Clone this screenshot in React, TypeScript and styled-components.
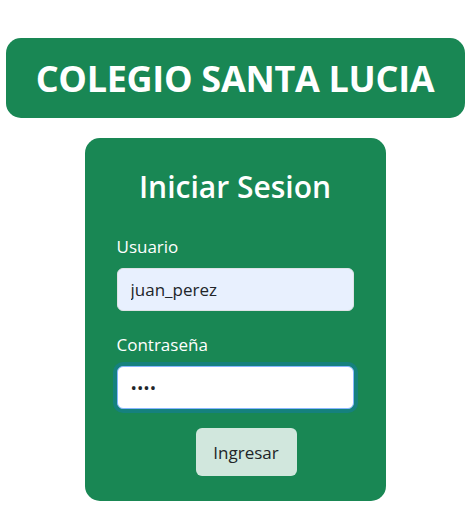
import React from "react";
import styled, { createGlobalStyle } from "styled-components";

const Global = createGlobalStyle`
  html, body { margin: 0; padding: 0; background: #fff; }
  body { font-family: "Open Sans", "Noto Sans", sans-serif; }
  * { box-sizing: border-box; }
`;

const Page = styled.div`
  display: flex;
  flex-direction: column;
  align-items: center;
  padding: 38px 0 0 0;
  gap: 20px;
`;

const Header = styled.header`
  width: 459px;
  height: 80px;
  background: #198754;
  border-radius: 15px;
  display: flex;
  align-items: center;
  justify-content: center;
`;

const Title = styled.h1`
  margin: 0;
  color: #fff;
  font-size: 36px;
  font-weight: 700;
  letter-spacing: -0.3px;
`;

const Card = styled.form`
  width: 301px;
  background: #198754;
  border-radius: 15px;
  padding: 28px 32px 25px 32px;
  display: flex;
  flex-direction: column;
`;

const CardTitle = styled.h2`
  margin: 0 0 27px;
  text-align: center;
  color: #fff;
  font-size: 30px;
  font-weight: 600;
  line-height: 42px;
`;

const Field = styled.div<{ $last?: boolean }>`
  display: flex;
  flex-direction: column;
  gap: 9px;
  margin-bottom: ${(p) => (p.$last ? "19px" : "22px")};
`;

const Label = styled.label`
  color: #fff;
  font-size: 17px;
  line-height: 24px;
`;

const Input = styled.input<{ $focused?: boolean; $autofill?: boolean }>`
  width: 237px;
  height: 43px;
  border-radius: 6px;
  border: 1px solid ${(p) => (p.$focused ? "#86b7fe" : "#dee2e6")};
  background: ${(p) => (p.$autofill ? "#e8f0fe" : "#fff")};
  padding: 0 13px;
  font-family: "Open Sans", "Noto Sans", sans-serif;
  font-size: 17px;
  color: #212529;
  outline: none;
  caret-color: #000;
  box-shadow: ${(p) => (p.$focused ? "0 0 0 4px rgba(13,110,253,0.25)" : "none")};
`;

const ButtonRow = styled.div`
  display: flex;
  justify-content: center;
  padding-left: 22px;
`;

const Button = styled.button`
  width: 101px;
  height: 48px;
  border: none;
  border-radius: 6px;
  background: #d1e7dd;
  color: #212529;
  font-family: "Open Sans", "Noto Sans", sans-serif;
  font-size: 17px;
`;

export default function App() {
  const pwRef = React.useRef<HTMLInputElement>(null);
  React.useEffect(() => {
    pwRef.current?.focus();
  }, []);
  return (
    <>
      <Global />
      <Page>
        <Header>
          <Title>COLEGIO SANTA LUCIA</Title>
        </Header>
        <Card onSubmit={(e) => e.preventDefault()}>
          <CardTitle>Iniciar Sesion</CardTitle>
          <Field>
            <Label htmlFor="u">Usuario</Label>
            <Input id="u" $autofill defaultValue="juan_perez" />
          </Field>
          <Field $last>
            <Label htmlFor="p">Contraseña</Label>
            <Input id="p" ref={pwRef} $focused type="password" defaultValue="1234" />
          </Field>
          <ButtonRow>
            <Button type="submit">Ingresar</Button>
          </ButtonRow>
        </Card>
      </Page>
    </>
  );
}
